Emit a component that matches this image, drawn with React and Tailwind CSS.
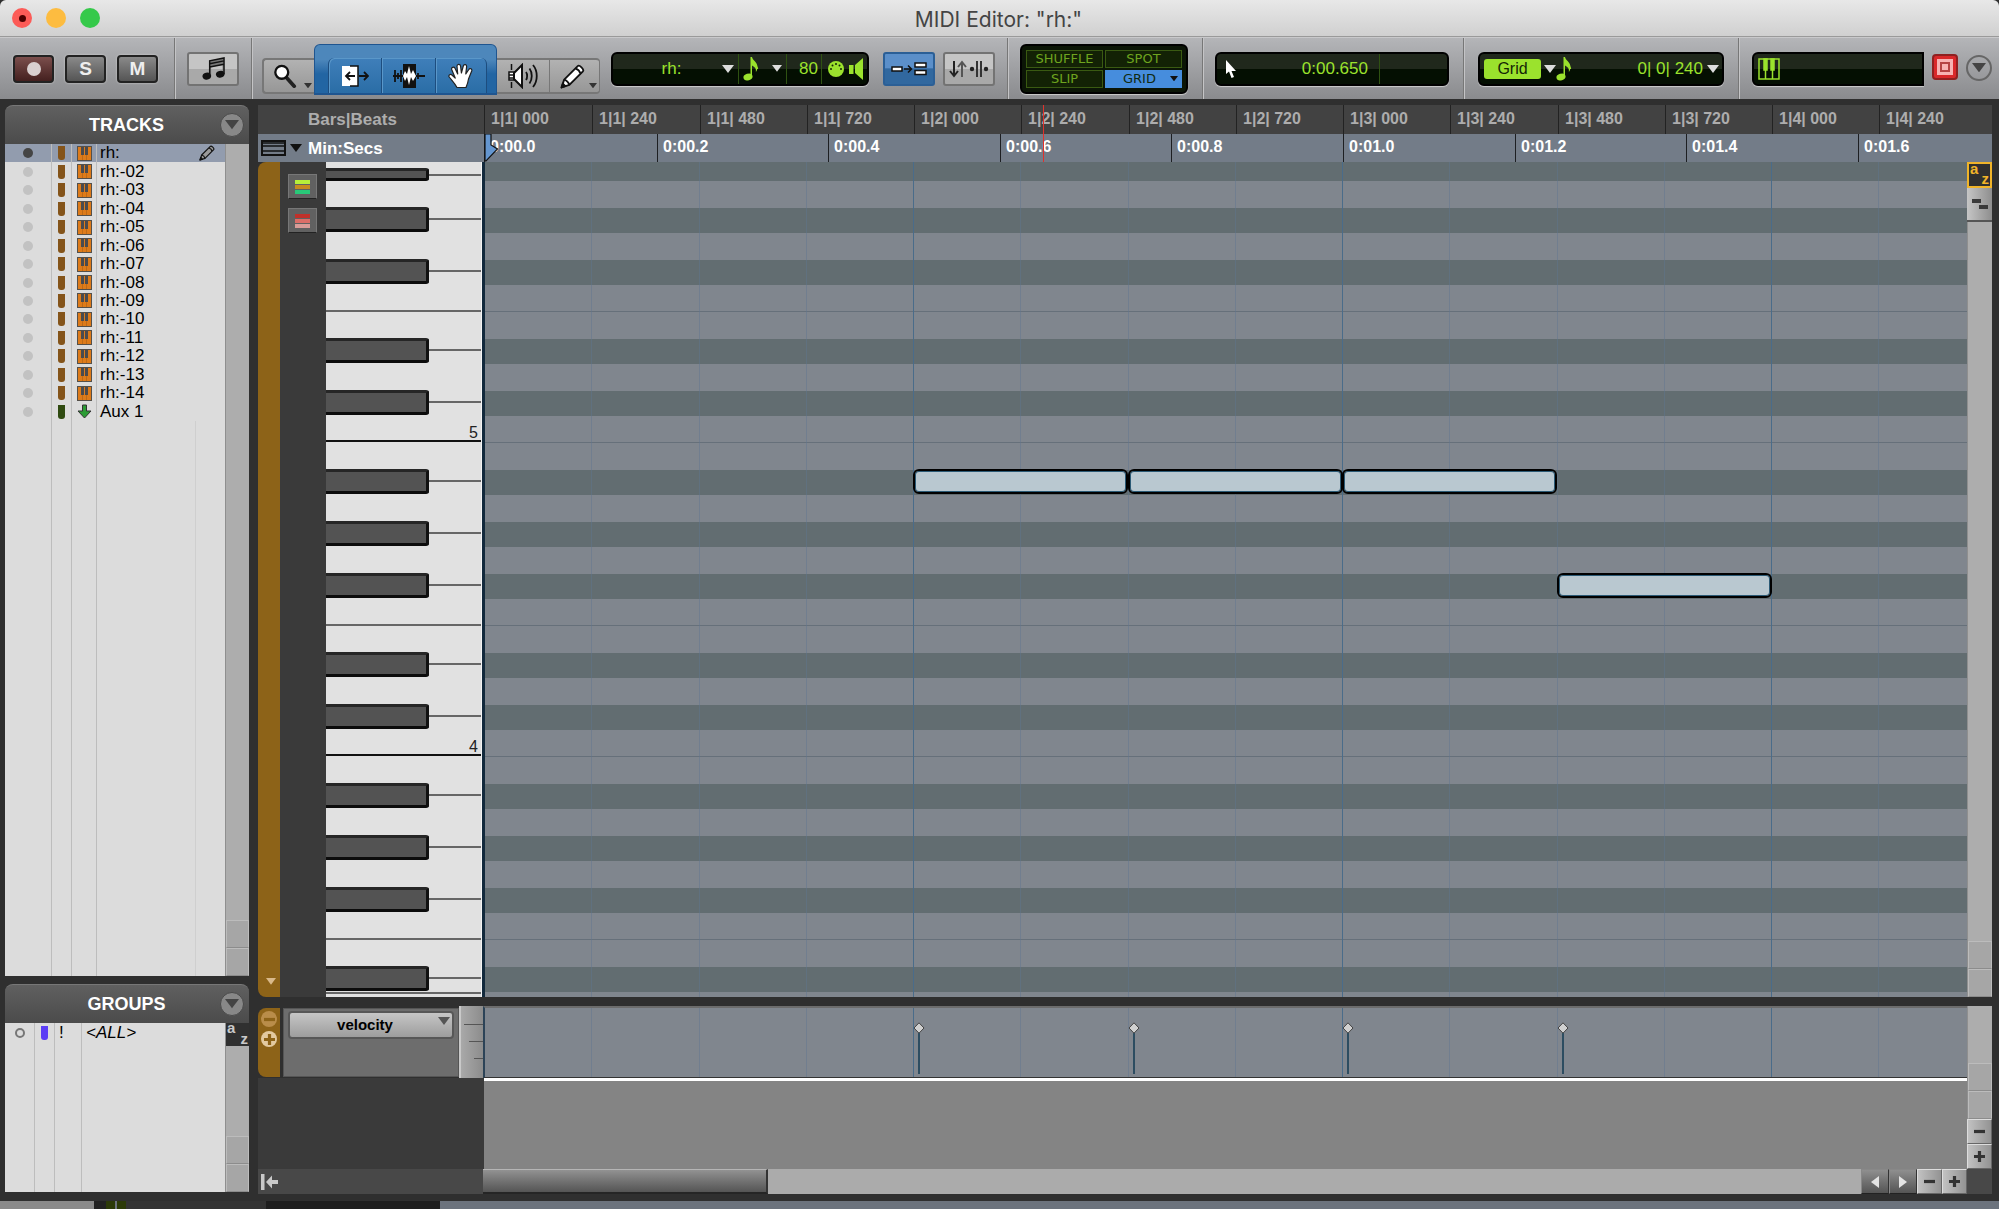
import React, { useState } from 'react';

const TRACKS = [
  'rh:', 'rh:-02', 'rh:-03', 'rh:-04', 'rh:-05', 'rh:-06', 'rh:-07', 'rh:-08',
  'rh:-09', 'rh:-10', 'rh:-11', 'rh:-12', 'rh:-13', 'rh:-14', 'Aux 1',
];

const BARS = [
  '1|1| 000', '1|1| 240', '1|1| 480', '1|1| 720', '1|2| 000', '1|2| 240', '1|2| 480',
  '1|2| 720', '1|3| 000', '1|3| 240', '1|3| 480', '1|3| 720', '1|4| 000', '1|4| 240',
];

const SECS = ['0:00.0', '0:00.2', '0:00.4', '0:00.6', '0:00.8', '0:01.0', '0:01.2', '0:01.4', '0:01.6'];

// horizontal zoom, in pixels
const GRID_STEP = 107.25;
const SEC_STEP = 171.6;

// note lanes from A# down to B: d = black key, w = white key, l = white key with a line under it
const OCTAVE_LANES = [
  ['d', 25], ['w', 27], ['d', 25], ['w', 27], ['d', 25], ['l', 27],
  ['w', 27], ['d', 25], ['w', 27], ['d', 25], ['l', 27], ['w', 27],
];
const LANES = [
  ['d', 19], ['w', 27], ['d', 25], ['w', 27], ['d', 25], ['l', 27],
  ['w', 27], ['d', 25], ['w', 27], ['d', 25], ['l', 27], ['w', 27],
  ...OCTAVE_LANES, ...OCTAVE_LANES,
];

// white keys: height, black key below, octave number
const octaveKeys = (label) => [
  { h: 40, black: true }, { h: 52, black: true }, { h: 52, black: true }, { h: 40 },
  { h: 39, black: true }, { h: 52, black: true }, { h: 39, label },
];
const KEYS = [
  { h: 14, black: true, short: true }, { h: 44, black: true }, { h: 52, black: true }, { h: 40 },
  { h: 39, black: true }, { h: 52, black: true }, { h: 39, label: '5' },
  ...octaveKeys('4'),
  { h: 40, black: true }, { h: 52, black: true }, { h: 52, black: true }, { h: 40 },
  { h: 39, black: true }, { h: 15 }, { h: 40 },
];

const NOTES = [
  { start: 4, lane: 307 },
  { start: 6, lane: 307 },
  { start: 8, lane: 307 },
  { start: 10, lane: 411 },
];

const gridX = (i) => Math.round(i * GRID_STEP);

function Triangle({ className = '' }) {
  return (
    <svg viewBox="0 0 12 8" className={`pointer-events-none ${className}`} fill="currentColor">
      <path d="M0 0h12L6 8z" />
    </svg>
  );
}

function NoteIcon({ className = '' }) {
  return (
    <svg viewBox="0 0 16 24" className={className} fill="currentColor">
      <path d="M7.500 0H9c.3 3 5.500 5 5.500 10 0 2-.6 3.800-1.600 5 .5-3.200-1-5-3.900-6.400V20H7.500z" />
      <path d="M9 4.500c1 3 5 4 5.500 7.500" fill="none" stroke="currentColor" strokeWidth="1.500" />
      <ellipse cx="5" cy="20" rx="4.600" ry="3.300" transform="rotate(-18 5 20)" />
    </svg>
  );
}

function PencilIcon({ className = '', body = '#fff' }) {
  return (
    <svg viewBox="0 0 24 24" className={className} stroke="#111" strokeWidth="1.800" strokeLinejoin="round">
      <path d="M1.500 22.500 4 15 17 2c1.500-1.500 6.500 3 5 5L9 20z" fill={body} />
      <path d="M15 4.500c2 .5 4 2.500 4.500 4.500M4 15c2 .5 4.500 3 5 5" fill="none" />
      <path d="M1.500 22.500l1.200-3.700 2.500 2.500z" fill="#111" />
    </svg>
  );
}

function KeysIcon() {
  return (
    <svg viewBox="0 0 15 15" className="size-[15px]">
      <rect width="15" height="15" fill="#55504a" />
      <path d="M1 1h13v13H1z" fill="#dd7b1a" />
      <path d="M4 1h3v8H4zM8 1h3v8H8z" fill="#4b4b4d" />
      <path d="M5.500 9v5M9.500 9v5" stroke="#a85f18" strokeWidth=".6" />
    </svg>
  );
}

function RoundMenu({ label }) {
  return (
    <button
      aria-label={label}
      className="flex size-6 items-center justify-center rounded-full border border-[#4a4a4a] bg-[#888] text-[#444]"
    >
      <Triangle className="w-3.5" />
    </button>
  );
}

function PanelHeader({ title }) {
  return (
    <div className="flex h-[39px] shrink-0 items-center rounded-t-lg border-t border-[#777] bg-gradient-to-b from-[#606060] to-[#4b4b4b] pr-[5px]">
      <h2 className="flex-1 pl-7 text-center text-[18px] font-bold text-white">{title}</h2>
      <RoundMenu label={`${title} menu`} />
    </div>
  );
}

// scroll track with the two step boxes at its end
function ScrollTrack({ children }) {
  return (
    <div className="flex flex-1 flex-col border-l border-[#8f8f8f] bg-[#adadad]">
      <div className="flex-1">{children}</div>
      <button aria-label="Scroll up" className="h-7 shrink-0 border border-[#bcbcbc] border-b-[#8c8c8c] bg-[#a6a6a6]" />
      <button aria-label="Scroll down" className="h-7 shrink-0 border border-[#bcbcbc] border-b-[#8c8c8c] bg-[#a6a6a6]" />
    </div>
  );
}

function SortButton({ className = '' }) {
  return (
    <button aria-label="Sort" className={`flex w-full justify-between bg-[#303030] px-px text-[15px] leading-[10px] font-bold ${className}`}>
      <span>a</span>
      <span className="self-end pb-0.5">z</span>
    </button>
  );
}

function Sidebar() {
  const [selected, setSelected] = useState(0);
  return (
    <aside className="mb-0.5 flex w-[244px] shrink-0 flex-col gap-2">
      <section className="flex min-h-0 flex-1 flex-col">
        <PanelHeader title="TRACKS" />
        <div className="flex flex-1">
          <div className="flex w-[220px] flex-col bg-[#dcdcdc]">
            <ul className="flex h-[277px] flex-col">
              {TRACKS.map((name, i) => (
                <li key={name} className="flex flex-1">
                  <button
                    onClick={() => setSelected(i)}
                    className={`grid w-full grid-cols-[47px_20px_25px_1fr_26px] items-center text-left text-[17px] leading-[18px] text-black ${selected === i ? 'bg-[#929cae]' : ''}`}
                  >
                    <span className="flex h-full items-center justify-center border-r border-[#bdbdbd]">
                      <span className={`size-2.5 rounded-full ${selected === i ? 'bg-[#454545]' : 'bg-[#c2c2c2]'}`} />
                    </span>
                    <span className="flex h-full items-center justify-center border-r border-[#bdbdbd]">
                      <span className={`h-[14px] w-[7px] rounded-b-[3px] ${i === 14 ? 'bg-[#2f4a10]' : 'bg-[#84541a]'}`} />
                    </span>
                    <span className="flex h-full items-center justify-center border-r border-[#bdbdbd]">
                      {i === 14 ? (
                        <svg viewBox="0 0 15 15" className="size-[15px]">
                          <path d="M5.500 1h4v6H14l-6.500 7L1 7h4.500z" fill="#2c9c35" stroke="#333" />
                        </svg>
                      ) : (
                        <KeysIcon />
                      )}
                    </span>
                    <span className="pl-[3px] whitespace-nowrap">{name}</span>
                    {i === 0 && <PencilIcon className="size-4" body="#9a9a9a" />}
                  </button>
                </li>
              ))}
            </ul>
            <div className="grid flex-1 grid-cols-[47px_20px_25px_99px_1fr]">
              <div className="border-r border-[#bdbdbd]" />
              <div className="border-r border-[#bdbdbd]" />
              <div className="border-r border-[#bdbdbd]" />
              <div className="border-r border-[#cfcfcf]" />
            </div>
          </div>
          <ScrollTrack />
        </div>
      </section>

      <section className="flex h-[208px] shrink-0 flex-col">
        <PanelHeader title="GROUPS" />
        <div className="flex flex-1">
          <div className="grid w-[220px] grid-cols-[30px_20px_27px_1fr] bg-[#dcdcdc] text-[17px] leading-5 text-black">
            <div className="flex justify-center border-r border-[#bdbdbd] pt-[5px]">
              <span className="size-[10px] rounded-full border-2 border-[#777]" />
            </div>
            <div className="flex justify-center border-r border-[#bdbdbd] pt-[3px]">
              <span className="h-[14px] w-[7px] rounded-b-[3px] bg-[#5b3df5]" />
            </div>
            <div className="border-r border-[#bdbdbd] pl-1">!</div>
            <div className="pl-1 italic">&lt;ALL&gt;</div>
          </div>
          <ScrollTrack>
            <SortButton className="h-[23px] text-[#c9c9c9]" />
          </ScrollTrack>
        </div>
      </section>
    </aside>
  );
}

function Section({ className = '', children }) {
  return (
    <div className={`flex shrink-0 items-center border-r border-[#777] shadow-[1px_0_0_#c4c4c6] ${className}`}>{children}</div>
  );
}

function Lcd({ className = '', children }) {
  return (
    <div
      className={`flex h-[34px] items-center rounded-md border-2 border-black bg-gradient-to-b from-[#20281c] from-50% to-[#040f02] to-50% text-[17px] text-[#9be22d] shadow-[0_1px_1px_#ccc] ${className}`}
    >
      {children}
    </div>
  );
}

const TOOL = 'relative flex h-[36px] items-center justify-center border-r border-[#777] bg-gradient-to-b from-[#b2b2b2] to-[#979797]';
const BLUE_TOOL = 'flex h-[35px] items-center justify-center border-l border-[#1d4d7f] bg-gradient-to-b from-[#3f7fba] to-[#2a6da6] shadow-[inset_1px_1px_0_#5a97c9]';
const SQUARE = 'flex h-[28px] w-[41px] items-center justify-center rounded-[4px] border-2 border-[#222] text-[19px] font-bold leading-none text-[#eee] shadow-[0_0_2px_#ddd]';
const MODE = 'flex items-center justify-center border border-[#3a5a12] bg-[#132205] text-[13px] leading-none text-[#6ea41f]';

function Toolbar() {
  return (
    <div className="flex h-[62px] shrink-0 border-t border-[#c9c9cb] bg-gradient-to-b from-[#b4b5b8] to-[#8a8b8e]">
      <Section className="w-[175px] gap-[11px] pl-[13px]">
        <button aria-label="Record" className={`${SQUARE} bg-gradient-to-b from-[#7c4f4d] to-[#44201f]`}>
          <span className="size-[14px] rounded-full bg-[#d9d0d0]" />
        </button>
        <button className={`${SQUARE} bg-gradient-to-b from-[#8a8a8a] to-[#555]`}>S</button>
        <button className={`${SQUARE} bg-gradient-to-b from-[#8a8a8a] to-[#555]`}>M</button>
      </Section>

      <Section className="w-[77px] pl-3">
        <button aria-label="Notation display" className="flex h-[34px] w-[52px] items-center justify-center rounded-[3px] border-2 border-[#737373] bg-gradient-to-b from-[#c5c5c5] from-50% to-[#a9a9a9] to-50%">
          <svg viewBox="0 0 24 24" className="size-[23px]" fill="#111">
            <path d="M8 4l15-3v17h-1.500V8L9.500 10.500V20H8z" fill="#777" />
            <path d="M8 20V4l15-3v17M8 7l15-3M8 10.500l15-3" fill="none" stroke="#111" strokeWidth="1.500" />
            <ellipse cx="5" cy="20" rx="4.500" ry="3.600" transform="rotate(-15 5 20)" />
            <ellipse cx="19" cy="18" rx="4.500" ry="3.600" transform="rotate(-15 19 18)" />
          </svg>
        </button>
      </Section>

      <Section className="w-[756px] pl-[10px]">
        <div className="flex h-full items-end">
          <button aria-label="Zoomer" className={`${TOOL} mb-[5px] w-[52px] rounded-l-[4px] border-2 border-r-0`}>
            <svg viewBox="0 0 26 26" className="mr-2 size-6">
              <path d="M14 14l9 10" stroke="#222" strokeWidth="4" strokeLinecap="round" />
              <circle cx="9.500" cy="9" r="7" fill="#fff" stroke="#111" strokeWidth="2.500" />
            </svg>
            <Triangle className="absolute right-0.5 bottom-1 w-2 text-[#333]" />
          </button>
          <div className="mb-[4px] flex h-[51px] w-[183px] items-end rounded-t-md border border-b-2 border-[#1f5590] bg-gradient-to-b from-[#4d87bb] from-30% to-[#2265a3] to-60% pl-[13px]">
            <button aria-label="Trimmer" className={`${BLUE_TOOL} w-[53px] rounded-tl-md`}>
              <svg viewBox="0 0 28 22" className="w-7">
                <path d="M1 1h16v20H1z" fill="#fff" />
                <path d="M9 1h8v20H9" fill="none" stroke="#111" strokeWidth="1.500" />
                <path d="M14 11H6m3-4-4 4 4 4M18 11h8m-3-4 4 4-4 4" fill="none" stroke="#111" strokeWidth="1.800" />
              </svg>
            </button>
            <button aria-label="Selector" className={`${BLUE_TOOL} w-[54px]`}>
              <svg viewBox="0 0 34 24" className="w-[34px]">
                <path d="M11 0h13v24H11z" fill="#111" />
                <path d="M1 12h10M3 6v12M6 9v6M9 6v12M24 12h9M26 9v6" stroke="#111" strokeWidth="1.800" />
                <path d="M11 12l2-5 2 3 2-8 2 8 2-4 3 6-3 5-2-4-2 8-2-8-2 4z" fill="#fff" />
              </svg>
            </button>
            <button aria-label="Grabber" className={`${BLUE_TOOL} w-[52px] rounded-tr-md border-r`}>
              <svg viewBox="0 0 26 26" className="size-[26px]">
                <path d="M9 24.500C7 20.500 4 17.500 1.200 14c-1-2 1.300-3.400 3-1.800L7.200 15 3.700 6.500c-.7-2.200 2.300-3.200 3.300-1.200L9.700 11 9 3.200c0-2.400 3.200-2.600 3.600-.1L13.400 10l1.900-7c.6-2.200 3.600-1.600 3.300.7L17.800 11l3-4.500c1.200-1.900 3.600-.5 2.900 1.500L20.500 16c-.5 3.500-1.200 5.500-2.500 8.500z" fill="#fff" stroke="#222" strokeWidth="1.200" strokeLinejoin="round" />
              </svg>
            </button>
          </div>
          <button aria-label="Scrubber" className={`${TOOL} mb-[5px] w-[53px] border-y-2`}>
            <svg viewBox="0 0 30 26" className="w-[30px]">
              <path d="M1 9h7v8H1z" fill="#fff" stroke="#111" strokeWidth="1.500" />
              <path d="M6 10l8-8v22l-8-8z" fill="#fff" stroke="#111" strokeWidth="2" />
              <path d="M3.500 1v6m0 12v6M1 12h6M1 15h6" stroke="#111" strokeWidth="1.500" />
              <path d="M18 9c1.500 2 1.500 6 0 8M21.500 5.500c3 4 3 11 0 15M25 2c5 6 5 16 0 22" fill="none" stroke="#111" strokeWidth="1.800" />
            </svg>
          </button>
          <button aria-label="Pencil" className={`${TOOL} mb-[5px] w-[50px] rounded-r-[4px] border-2 border-l-0`}>
            <PencilIcon className="mr-1 size-[25px]" />
            <Triangle className="absolute right-0.5 bottom-1 w-2 text-[#333]" />
          </button>
        </div>

        <Lcd className="ml-[11px] w-[258px]">
          <div className="relative flex h-full flex-1 items-center border-r border-[#2f5212]">
            <select aria-label="Default track" className="w-full appearance-none pr-2 text-center outline-none">
              <option>rh:</option>
            </select>
            <Triangle className="absolute right-1 w-3 text-[#ddd]" />
          </div>
          <button aria-label="Note duration" className="flex h-full w-12 items-center justify-between border-r border-[#2f5212] px-1">
            <NoteIcon className="h-6 w-4" />
            <Triangle className="w-2.5 text-[#ddd]" />
          </button>
          <input aria-label="Note velocity" defaultValue="80" className="h-full w-[35px] border-r border-[#2f5212] pr-[3px] text-right outline-none" />
          <div className="flex w-[45px] items-center justify-between pr-1 pl-1.5">
            <svg viewBox="0 0 16 16" className="size-4">
              <circle cx="8" cy="8" r="8" fill="#9be22d" />
              <g fill="#142506">
                <circle cx="3" cy="8" r="1" />
                <circle cx="4.500" cy="4.500" r="1" />
                <circle cx="8" cy="3" r="1" />
                <circle cx="11.500" cy="4.500" r="1" />
                <circle cx="13" cy="8" r="1" />
              </g>
            </svg>
            <svg viewBox="0 0 14 22" className="h-[22px] w-[14px]" fill="currentColor">
              <path d="M0 7h4.500v9H0zM6 7l8-7v22l-8-7z" />
            </svg>
          </div>
        </Lcd>

        <button aria-label="Mirrored editing" className="ml-[14px] flex h-[34px] w-[52px] items-center justify-center rounded-[3px] border-2 border-[#2b5f96] bg-gradient-to-b from-[#5b8fc9] from-45% to-[#31689f] to-50%">
          <svg viewBox="0 0 36 14" className="w-9" fill="#fff" stroke="#111" strokeWidth="1.500">
            <rect x="1" y="5" width="10" height="4" />
            <path d="M13 7h7m-3-3.500L20.500 7 17 10.500" fill="none" />
            <rect x="24" y="1" width="11" height="4" />
            <rect x="24" y="8.500" width="11" height="4" />
          </svg>
        </button>
        <button aria-label="Link timeline and edit selection" className="ml-2 flex h-[34px] w-[52px] items-center justify-center rounded-[3px] border-2 border-[#737373] bg-gradient-to-b from-[#c5c5c5] from-50% to-[#a9a9a9] to-50%">
          <svg viewBox="0 0 40 18" className="w-10" fill="none" stroke="#222" strokeWidth="2">
            <path d="M5 1v14M1 11l4 5 4-5" />
            <path d="M13 17V3M9 7l4-5 4 5" stroke="#555" />
            <path d="M28 1v16M32 1v16" stroke="#333" />
            <circle cx="23" cy="9" r="2.200" fill="#222" stroke="none" />
            <circle cx="37" cy="9" r="2.200" fill="#222" stroke="none" />
          </svg>
        </button>
      </Section>

      <Section className="w-[195px] pl-3">
        <div className="grid h-[50px] w-[168px] grid-cols-2 gap-0.5 rounded-md border-2 border-black bg-[#0b1506] p-1 font-['DejaVu_Sans',sans-serif] shadow-[0_1px_1px_#ccc]">
          <button className={MODE}>SHUFFLE</button>
          <button className={MODE}>SPOT</button>
          <button className={MODE}>SLIP</button>
          <button className="relative flex items-center justify-center bg-[#468ddd] pr-2 text-[13px] leading-none text-[#102a10]">
            GRID
            <Triangle className="absolute right-1 w-2 text-[#111]" />
          </button>
        </div>
      </Section>

      <Section className="w-[261px] pl-3">
        <Lcd className="w-[234px]">
          <svg viewBox="0 0 12 20" className="ml-2 h-5 w-3">
            <path d="M1 1v14l3-2.500L6.500 19l2.500-1-2.500-6H11z" fill="#fff" />
          </svg>
          <output className="flex h-full flex-1 items-center justify-end border-r border-[#2f5212] pr-[11px]">0:00.650</output>
          <span className="w-[67px]" />
        </Lcd>
      </Section>

      <Section className="w-[275px] pl-[14px]">
        <Lcd className="w-[246px] pl-1">
          <button className="h-5 w-[57px] rounded-[3px] bg-[#9be22d] text-base leading-5 text-[#152606]">Grid</button>
          <Triangle className="ml-[3px] w-3 text-[#ddd]" />
          <NoteIcon className="h-6 w-4" />
          <div className="relative flex flex-1 items-center">
            <select aria-label="Grid value" className="w-full appearance-none pr-[19px] text-right outline-none">
              <option>0| 0| 240</option>
            </select>
            <Triangle className="absolute right-[3px] w-3 text-[#ddd]" />
          </div>
        </Lcd>
      </Section>

      <div className="flex flex-1 items-center pr-[7px] pl-[13px]">
        <Lcd className="flex-1 rounded-r-none pl-1">
          <svg viewBox="0 0 22 22" className="size-[22px]" fill="none" stroke="#9be22d" strokeWidth="1.500">
            <rect x="1" y="1" width="20" height="20" />
            <path d="M6 12V1h3v11zM13 12V1h3v11z" fill="#9be22d" />
            <path d="M7.500 12v9M14.500 12v9" />
          </svg>
        </Lcd>
        <button aria-label="Target" className="mr-2 mb-1 ml-2 flex size-[26px] items-center justify-center rounded-[4px] border-2 border-[#8f2020] bg-[#d9282a]">
          <span className="flex size-[16px] items-center justify-center bg-[#f7b3b3]">
            <span className="size-[10px] border-2 border-[#b54444] bg-[#f7b3b3]" />
          </span>
        </button>
        <button aria-label="Toolbar menu" className="mb-0.5 flex size-[26px] items-center justify-center rounded-full border-2 border-[#666] text-[#444]">
          <Triangle className="w-3.5" />
        </button>
      </div>
    </div>
  );
}

function Rulers() {
  return (
    <div className="flex shrink-0 overflow-hidden text-base font-bold leading-none">
      <div className="w-[226px] shrink-0 text-[17px]">
        <div className="flex h-[29px] items-center bg-[#424242] pl-[50px] text-[#adadad]">Bars|Beats</div>
        <div className="flex h-7 items-center bg-[#737c88] pl-[3px] text-white">
          <button aria-label="Ruler options" className="mr-1.5 flex items-center gap-1">
            <svg viewBox="0 0 25 16" className="h-4 w-[25px]" fill="none" stroke="#111" strokeWidth="2">
              <rect x="1" y="1" width="23" height="14" />
              <path d="M1 3h23M1 6h23M1 11h23" strokeWidth="1.500" />
            </svg>
            <Triangle className="w-3 text-[#111]" />
          </button>
          Min:Secs
        </div>
      </div>
      <div className="relative min-w-0 flex-1 overflow-hidden">
        <div className="flex h-[29px] bg-[#424242] text-[#adadad]">
          {BARS.map((label, i) => (
            <div
              key={label}
              style={{ width: gridX(i + 1) - gridX(i) + (i === 0 ? 1 : 0) }}
              className="shrink-0 border-l border-[#222] pt-1.5 pl-[6px] whitespace-pre"
            >
              {label}
            </div>
          ))}
        </div>
        <div className="flex h-7 bg-[#737c88] text-white">
          {SECS.map((label, i) => (
            <div
              key={label}
              style={{ width: Math.round((i + 1) * SEC_STEP) - Math.round(i * SEC_STEP) + (i === 0 ? 1 : 0) }}
              className="shrink-0 border-l border-[#1d1f22] pt-[5px] pl-[5px]"
            >
              {label}
            </div>
          ))}
        </div>
        <svg viewBox="0 0 14 28" className="absolute bottom-0 left-0 h-7 w-3.5">
          <path d="M1 0h6v11l6.500 4L2 27H1z" fill="#6496d0" stroke="#111" strokeWidth="1.200" />
        </svg>
        <div className="absolute inset-y-0 left-[559px] w-px bg-[#e0322c]" />
      </div>
    </div>
  );
}

function GridLines() {
  return BARS.map((label, i) =>
    i === 0 ? null : (
      <div
        key={label}
        style={{ left: gridX(i) - 1 }}
        className={`absolute inset-y-0 w-px ${i % 4 === 0 ? 'bg-[#4a6c8a]' : 'bg-[#5f7590]/45'}`}
      />
    )
  );
}

function Keyboard() {
  return (
    <div className="flex w-[156px] shrink-0 flex-col overflow-hidden border-r border-[#f4f4f4] bg-[#e1e1e1]">
      {KEYS.map((key, i) => (
        <div
          key={i}
          style={{ height: key.h }}
          className={`relative shrink-0 border-b-2 ${key.label ? 'border-b-[#111]' : 'border-b-[#666]'}`}
        >
          {key.black && (
            <div
              className={`absolute left-0 z-10 w-[103px] rounded-r-[3px] border-t-[3px] border-r-[3px] border-b-[3px] border-t-[#262626] border-r-[#111] border-b-[#0c0c0c] bg-[#535353] ${key.short ? '-bottom-[7px] h-[13px]' : '-bottom-[14px] h-[25px]'}`}
            />
          )}
          {key.label && (
            <span className="absolute right-[3px] -bottom-px text-[16px] leading-4 text-[#222]">{key.label}</span>
          )}
        </div>
      ))}
    </div>
  );
}

function PianoRoll() {
  return (
    <div className="flex min-h-0 flex-1">
      <div className="flex w-[22px] shrink-0 items-end justify-center rounded-l-lg bg-[#8d6318] pb-3 pl-1">
        <Triangle className="w-2.5 text-[#d9b98a]" />
      </div>
      <div className="flex w-[46px] shrink-0 flex-col gap-[9px] bg-[#3a3a3a] pt-3 pl-2">
        <button aria-label="Color coding by track" className="flex h-[25px] w-[29px] flex-col items-center justify-center gap-px border border-[#777] border-b-[#222] bg-[#616161]">
          <span className="h-1 w-[15px] bg-[#b6ee3a]" />
          <span className="h-1 w-[15px] bg-[#c58a20]" />
          <span className="h-1 w-[15px] bg-[#28c878]" />
        </button>
        <button aria-label="Color coding by velocity" className="flex h-[25px] w-[29px] flex-col items-center justify-center gap-px border border-[#777] border-b-[#222] bg-[#616161]">
          <span className="h-1 w-[15px] bg-[#c0302a]" />
          <span className="h-1 w-[15px] bg-[#dc6e68]" />
          <span className="h-1 w-[15px] bg-[#d99c98]" />
        </button>
      </div>
      <Keyboard />
      <div className="relative min-w-0 flex-1 overflow-hidden border-l-[3px] border-[#12293c] bg-[#80868e]">
        <div className="flex flex-col">
          {LANES.map(([kind, height], i) => (
            <div
              key={i}
              style={{ height }}
              className={`shrink-0 ${kind === 'd' ? 'bg-[#626d71]' : 'bg-[#80868e]'} ${kind === 'l' ? 'border-b border-[#66707a]' : ''}`}
            />
          ))}
        </div>
        <GridLines />
        {NOTES.map((note) => (
          <div
            key={note.start}
            style={{ left: gridX(note.start) - 1, top: note.lane, width: gridX(2) }}
            className="absolute h-[25px] rounded-md border-2 border-black bg-[#b9c8d0] shadow-[inset_0_0_0_1px_#2b5a75]"
          />
        ))}
      </div>
      <div className="flex w-[25px] shrink-0 flex-col">
        <SortButton className="h-[26px] border-2 border-[#f0b429] text-[#f0b429]" />
        <button aria-label="Vertical zoom" className="flex h-[34px] shrink-0 items-center justify-center border-b-2 border-[#555] bg-gradient-to-r from-[#c6c6c6] to-[#8e8e8e]">
          <svg viewBox="0 0 16 10" className="w-4" fill="#3a3a3a">
            <path d="M0 0h9v4H0zM7 6h9v4H7z" />
          </svg>
        </button>
        <ScrollTrack />
      </div>
    </div>
  );
}

const STEP = 'flex h-[25px] items-center justify-center border border-[#ddd] border-r-[#666] border-b-[#666] bg-gradient-to-r from-[#c2c2c2] to-[#939393] text-[#333]';
const ARROW = 'flex h-[25px] w-[28px] items-center justify-center border border-[#888] border-r-[#333] border-b-[#222] bg-gradient-to-b from-[#8f8f8f] to-[#555] text-[#e4e4e4]';

function Sign({ plus }) {
  return (
    <svg viewBox="0 0 12 12" className="size-[11px]" fill="none" stroke="currentColor" strokeWidth="3.500">
      <path d={plus ? 'M0 6h12M6 0v12' : 'M0 6h12'} />
    </svg>
  );
}

function VelocityLane() {
  return (
    <div className="flex h-[163px] shrink-0">
      <div className="flex min-w-0 flex-1 flex-col">
        <div className="flex h-[72px] shrink-0">
          <div className="mt-0.5 mb-px flex w-[22px] shrink-0 flex-col items-center gap-1 rounded-l-lg bg-[#8d6318] pt-[3px]">
            <button aria-label="Remove lane" className="flex size-4 items-center justify-center rounded-full bg-[#b98d4a] text-[#8d6318]">
              <Sign />
            </button>
            <button aria-label="Add lane" className="flex size-4 items-center justify-center rounded-full bg-[#e2c9a0] text-[#8d6318]">
              <Sign plus />
            </button>
          </div>
          <div className="mt-0.5 mb-px ml-[3px] w-[176px] shrink-0 border border-[#555] bg-[#6d6d6d] px-1 pt-0.5">
            <div className="relative">
              <select
                aria-label="Controller lane"
                className="h-7 w-full appearance-none rounded-[4px] border-2 border-[#575757] bg-gradient-to-b from-[#c6c6c6] to-[#9d9d9d] pr-3 text-center text-[15px] font-bold text-black outline-none"
              >
                <option>velocity</option>
              </select>
              <Triangle className="absolute top-1.5 right-1 w-3 text-[#555]" />
            </div>
          </div>
          <div className="flex w-6 shrink-0 flex-col items-end gap-4 border-l-2 border-[#c9c9c9] bg-gradient-to-r from-[#a9a9a9] to-[#8c8c8c] pt-[18px]">
            <span className="h-px w-[19px] bg-[#555]" />
            <span className="h-px w-[14px] bg-[#555]" />
            <span className="h-px w-[9px] bg-[#555]" />
          </div>
          <div className="relative min-w-0 flex-1 overflow-hidden border-t-2 border-b border-l-2 border-t-[#6c6c6c] border-b-[#333] border-l-[#2c4357] bg-[#80868e]">
            <GridLines />
            {NOTES.map((note) => (
              <svg
                key={note.start}
                viewBox="0 0 12 54"
                style={{ left: gridX(note.start) - 1 }}
                className="absolute top-[14px] h-[54px] w-3"
              >
                <path d="M6 10v42" stroke="#123a52" strokeWidth="1.500" />
                <path d="M6 .8 11 6l-5 5.200L1 6z" fill="#d0d0d0" stroke="#444" />
              </svg>
            ))}
          </div>
        </div>
        <div className="flex flex-1">
          <div className="w-[226px] shrink-0 bg-[#3a3a3a]" />
          <div className="flex-1 border-t-[3px] border-white bg-[#848484]" />
        </div>
      </div>
      <div className="flex w-[25px] shrink-0 flex-col">
        <ScrollTrack />
        <button aria-label="Vertical zoom out" className={STEP}><Sign /></button>
        <button aria-label="Vertical zoom in" className={STEP}><Sign plus /></button>
      </div>
    </div>
  );
}

function BottomBar() {
  return (
    <div className="flex h-[25px] shrink-0 bg-[#484848]">
      <div className="flex w-[225px] shrink-0 items-center pl-[3px]">
        <button aria-label="Return to start">
          <svg viewBox="0 0 17 16" className="h-4 w-[17px]" fill="#c9c9c9">
            <path d="M0 0h3.500v16H0zM5 8l6-6.500V6h6v4h-6v4.500z" />
          </svg>
        </button>
      </div>
      <div className="flex-1 bg-[#ababab]">
        <div className="h-full w-[285px] border-t border-r-2 border-b-2 border-t-[#b5b5b5] border-r-[#333] border-b-[#252525] bg-gradient-to-b from-[#929292] to-[#555]" />
      </div>
      <button aria-label="Scroll left" className={ARROW}>
        <Triangle className="w-3 rotate-90" />
      </button>
      <button aria-label="Scroll right" className={ARROW}>
        <Triangle className="w-3 -rotate-90" />
      </button>
      <button aria-label="Horizontal zoom out" className={`${STEP} w-[25px]`}><Sign /></button>
      <button aria-label="Horizontal zoom in" className={`${STEP} w-[25px]`}><Sign plus /></button>
      <div className="w-[25px]" />
    </div>
  );
}

export default function App() {
  return (
    <div className="flex h-screen flex-col overflow-hidden bg-[#2f2f2f] font-['Liberation_Sans',Arial,sans-serif]">
      <header className="flex h-[37px] shrink-0 items-center rounded-t-md border-b border-[#9a9a9a] bg-gradient-to-b from-[#e8e8e8] to-[#d0d0d0]">
        <div className="flex gap-[14px] pl-3">
          <button aria-label="Close" className="flex size-5 items-center justify-center rounded-full bg-[#fc5b57]">
            <span className="size-[7px] rounded-full bg-[#4d0000]" />
          </button>
          <button aria-label="Minimize" className="size-5 rounded-full bg-[#fdbc40]" />
          <button aria-label="Zoom" className="size-5 rounded-full bg-[#35c94a]" />
        </div>
        <h1 className="flex-1 pt-0.5 pr-[102px] text-center font-['Inter',sans-serif] text-[21px] leading-none text-[#444]">MIDI Editor: "rh:"</h1>
      </header>
      <Toolbar />
      <main className="flex min-h-0 flex-1 gap-[9px] pt-1.5 pr-[7px] pb-[7px] pl-[5px]">
        <Sidebar />
        <div className="flex min-w-0 flex-1 flex-col">
          <Rulers />
          <PianoRoll />
          <div className="h-[9px] shrink-0" />
          <VelocityLane />
          <BottomBar />
        </div>
      </main>
      {/* strip of the window behind */}
      <div className="flex h-2 shrink-0 bg-[#6c737d]">
        <div className="w-[94px] bg-[#8a8a8a]" />
        <div className="w-[12px] bg-[#222]" />
        <div className="flex w-5 gap-0.5">
          <div className="flex-1 bg-[#2c3a08]" />
          <div className="flex-1 bg-[#2c3a08]" />
        </div>
        <div className="w-[140px] bg-[#333]" />
        <div className="w-[174px] bg-[#1e1e1e]" />
      </div>
    </div>
  );
}
